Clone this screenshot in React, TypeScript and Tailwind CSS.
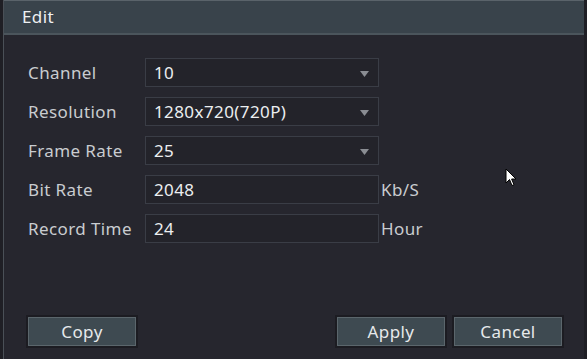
const rows = [
    { label: "Channel", value: "10", select: true },
    { label: "Resolution", value: "1280x720(720P)", select: true },
    { label: "Frame Rate", value: "25", select: true },
    { label: "Bit Rate", value: "2048", unit: "Kb/S" },
    { label: "Record Time", value: "24", unit: "Hour" },
];

function Field({ value, select }: { value: string; select?: boolean }) {
    return (
        <div className="flex h-[29px] w-[234px] items-center justify-between border border-[#3a3d46] bg-[#23232a] pl-[8px] pr-[9px] text-[#eceef0]">
            <span>{value}</span>
            {select && (
                <svg width="9" height="6" viewBox="0 0 9 6" className="mt-[2px]">
                    <path d="M0 0 L9 0 L4.5 6 Z" fill="#8a8d93" />
                </svg>
            )}
        </div>
    );
}

function Btn({ children }: { children: string }) {
    return (
        <button className="h-[29px] w-[108px] border border-[#5b666c] bg-[#3e4a51] text-[#e6e9eb] shadow-[0_0_0_2px_#1c1c22]">
            {children}
        </button>
    );
}

export default function App() {
    return (
        <div className="relative flex h-[359px] w-[587px] flex-col bg-[#1f1f25] pl-[3px] pr-[3px] font-['Noto_Sans',sans-serif] text-[17px] tracking-[0.4px]">
            <div className="flex h-full flex-col border-l border-[#4a5057] bg-[#26262e]">
                {/* Title bar */}
                <div className="flex h-[35px] items-center border-t border-b-2 border-t-[#5a636a] border-b-[#4b555c] bg-[#39434b] pl-[18px] text-[#eef0f2]">
                    Edit
                </div>

                {/* Form */}
                <div className="flex flex-col gap-[10px] pl-[24px] pt-[23px]">
                    {rows.map((r) => (
                        <div key={r.label} className="flex items-center">
                            <div className="w-[117px] text-[#c9ccd0]">{r.label}</div>
                            <Field value={r.value} select={r.select} />
                            {r.unit && <span className="ml-[2px] text-[#c9ccd0]">{r.unit}</span>}
                        </div>
                    ))}
                </div>

                {/* Footer */}
                <div className="mt-auto flex items-center pb-[13px] pl-[24px] pr-[22px]">
                    <Btn>Copy</Btn>
                    <div className="ml-auto flex gap-[9px]">
                        <Btn>Apply</Btn>
                        <Btn>Cancel</Btn>
                    </div>
                </div>
            </div>

            {/* Mouse cursor */}
            <svg className="absolute left-[505px] top-[168px]" width="13" height="20" viewBox="0 0 13 20">
                <path d="M1 1 L1 15 L4.5 11.5 L7 17.5 L9 16.7 L6.6 11 L11 11 Z" fill="#ffffff" stroke="#000000" strokeWidth="1" />
            </svg>
        </div>
    );
}
